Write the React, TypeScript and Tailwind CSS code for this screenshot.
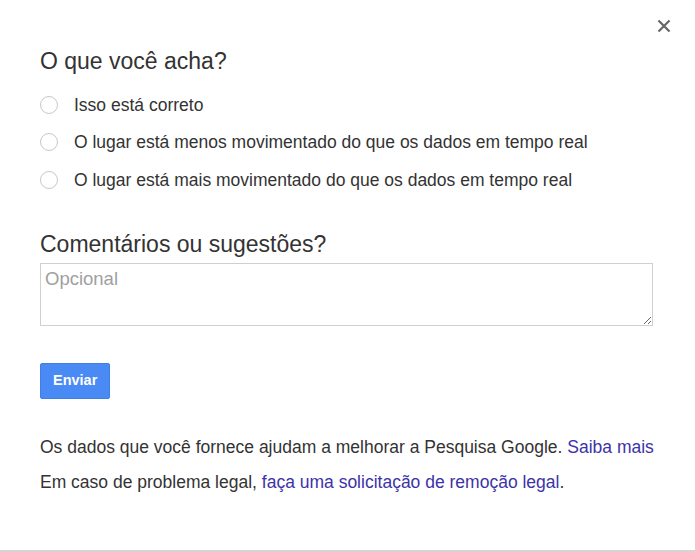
import { useState } from "react";

const options = [
  "Isso está correto",
  "O lugar está menos movimentado do que os dados em tempo real",
  "O lugar está mais movimentado do que os dados em tempo real",
];

export default function App() {
  const [picked, setPicked] = useState<number | null>(null);

  return (
    <div className="relative w-[695px] h-[552px] bg-white border-b-2 border-[#d4d4d4] font-['Liberation_Sans',Arial,sans-serif] text-[#333]">
      <button className="absolute right-[24px] top-[19px] w-[14px] h-[14px] text-[#666]" aria-label="Fechar">
        <svg viewBox="0 0 14 14" width="14" height="14">
          <path d="M1.5 1.5L12.5 12.5M12.5 1.5L1.5 12.5" stroke="currentColor" strokeWidth="2.2" />
        </svg>
      </button>

      <div className="pl-[40px] pr-[40px] pt-[48px]">
        <h2 className="text-[23px] leading-[26px] text-[#333]">O que você acha?</h2>

        <div className="mt-[12px] flex flex-col">
          {options.map((o, i) => (
            <label key={i} className="flex items-center h-[37.5px] cursor-pointer" onClick={() => setPicked(i)}>
              <span className="w-[18px] h-[18px] rounded-full border border-[#c8c8c8] flex items-center justify-center">
                {picked === i && <span className="w-[8px] h-[8px] rounded-full bg-[#4285f4]" />}
              </span>
              <span className="ml-[16px] text-[17.5px] text-[#333]">{o}</span>
            </label>
          ))}
        </div>

        <h2 className="mt-[32px] text-[23px] leading-[26px] text-[#333]">Comentários ou sugestões?</h2>
        <textarea
          placeholder="Opcional"
          className="mt-[6px] block w-[613px] h-[63px] border border-[#d0d0d0] px-[4px] py-[1px] text-[18.5px] placeholder:text-[#a0a0a0] outline-none"
        />

        <button className="mt-[37px] h-[36px] px-[12px] rounded-[2px] bg-[#4a8af4] border border-[#3f7fe8] text-white text-[14.5px] font-bold">
          Enviar
        </button>

        <p className="mt-[38px] text-[17.5px] leading-[20px] text-[#333]">
          Os dados que você fornece ajudam a melhorar a Pesquisa Google.{" "}
          <a className="text-[#3c33a8]">Saiba mais</a>
        </p>
        <p className="mt-[15px] text-[17.5px] leading-[20px] text-[#333]">
          Em caso de problema legal, <a className="text-[#3c33a8]">faça uma solicitação de remoção legal</a>.
        </p>
      </div>
    </div>
  );
}
